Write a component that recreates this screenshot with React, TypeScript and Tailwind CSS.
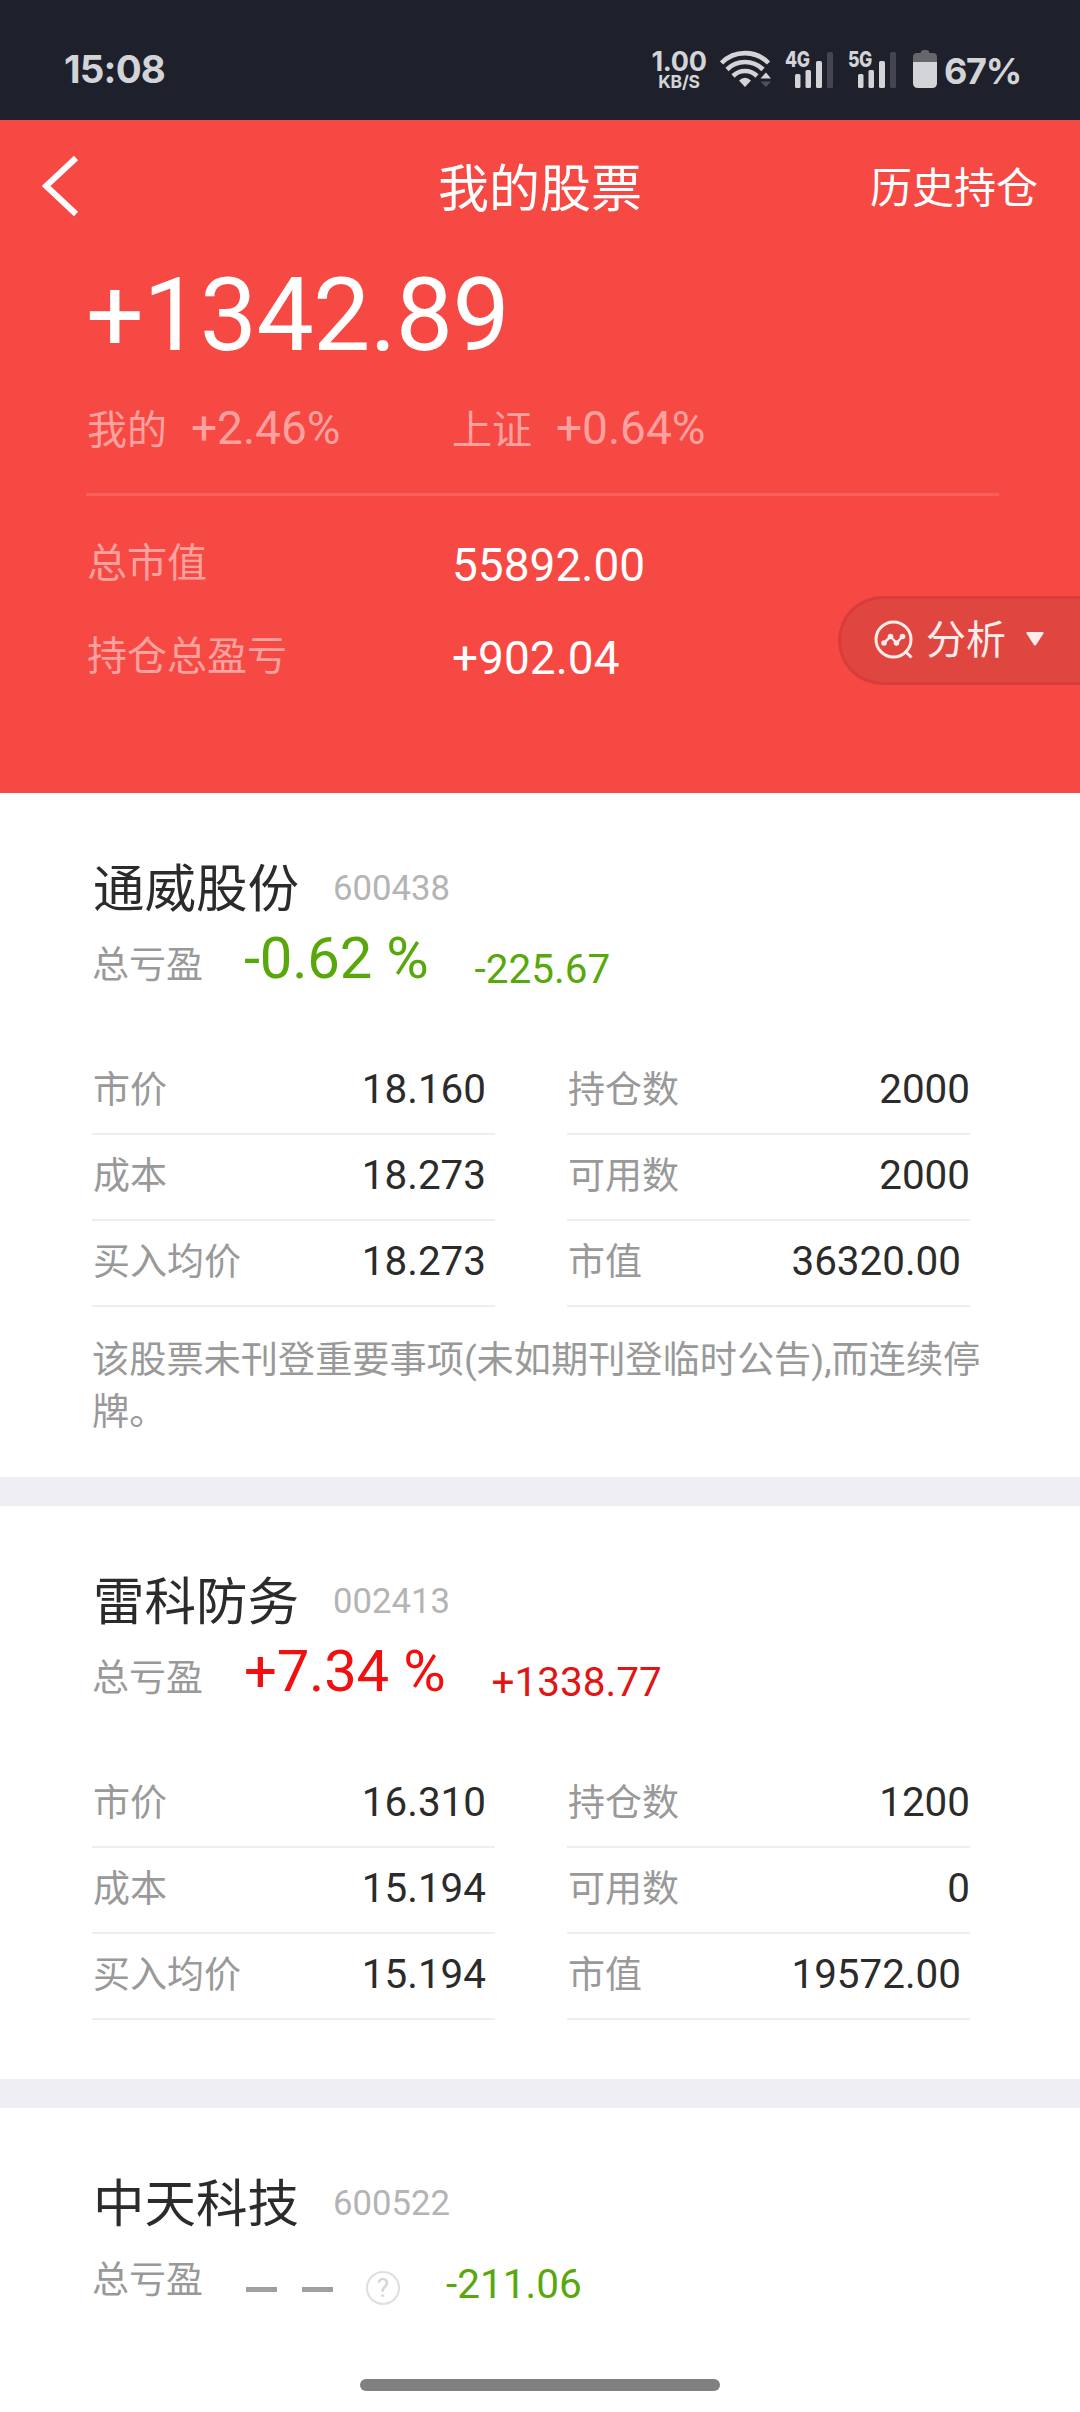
import React from "react";
import { clsx } from "clsx";

type Stock = {
  name: string;
  code: string;
  percent?: string;
  profit: string;
  up: boolean;
  left?: [string, string][];
  right?: [string, string][];
  notice?: string;
};

const stocks: Stock[] = [
  {
    name: "通威股份",
    code: "600438",
    percent: "-0.62 %",
    profit: "-225.67",
    up: false,
    left: [
      ["市价", "18.160"],
      ["成本", "18.273"],
      ["买入均价", "18.273"],
    ],
    right: [
      ["持仓数", "2000"],
      ["可用数", "2000"],
      ["市值", "36320.00"],
    ],
    notice: "该股票未刊登重要事项(未如期刊登临时公告),而连续停牌。",
  },
  {
    name: "雷科防务",
    code: "002413",
    percent: "+7.34 %",
    profit: "+1338.77",
    up: true,
    left: [
      ["市价", "16.310"],
      ["成本", "15.194"],
      ["买入均价", "15.194"],
    ],
    right: [
      ["持仓数", "1200"],
      ["可用数", "0"],
      ["市值", "19572.00"],
    ],
  },
  {
    name: "中天科技",
    code: "600522",
    profit: "-211.06",
    up: false,
  },
];

const WifiIcon = () => (
  <svg width="52" height="38" viewBox="0 0 52 38" fill="none" stroke="#d3d4d7" strokeWidth="4.6">
    <path d="M1.5 13 A33 33 0 0 1 48.5 13" />
    <path d="M7 19.5 A25.5 25.5 0 0 1 43 19.5" />
    <path d="M13 26 A17 17 0 0 1 37 26" />
    <path d="M19 30.5 Q25 25 31 30.5 L25 37 Z" fill="#d3d4d7" stroke="none" />
    <path d="M40.5 28.5 L46 22.5 L51 28.5 Z" fill="#d3d4d7" stroke="none" />
    <path d="M40.5 31.5 L46 37 L51 31.5 Z" fill="#50525b" stroke="none" />
  </svg>
);

const Signal = ({ label }: { label: string }) => (
  <div className="relative h-[38px] w-[49px]">
    <span className="absolute -top-[3px] left-0 origin-left scale-x-[0.8] text-[22px] font-extrabold leading-[24px] tracking-[-0.5px]">
      {label}
    </span>
    <svg width="49" height="38" viewBox="0 0 49 38" fill="#d3d4d7">
      <rect x="10" y="24" width="5.5" height="14" rx="1.5" />
      <rect x="20.5" y="20" width="5.5" height="18" rx="1.5" />
      <rect x="31" y="11" width="6" height="27" rx="1.5" />
      <rect x="42" y="2" width="6" height="36" rx="1.5" fill="#434650" />
    </svg>
  </div>
);

const BatteryIcon = () => (
  <svg width="24" height="38" viewBox="0 0 24 38">
    <path
      d="M0 12 V7 Q0 3 4 3 H7.5 Q8 0 11 0 H13 Q16 0 16.5 3 H20 Q24 3 24 7 V12 Z"
      fill="#65676d"
    />
    <path d="M0 12 H24 V33 Q24 38 19 38 H5 Q0 38 0 33 Z" fill="#d3d4d7" />
  </svg>
);

const StatusBar = () => (
  <div className="flex h-[120px] items-start bg-[#1e212b] pl-[64px] pr-[59px] font-['Inter',sans-serif] text-[#d3d4d7]">
    <span className="mt-[49px] text-[38.5px] font-bold leading-[40px] tracking-[-0.8px]">15:08</span>
    <div className="ml-auto mt-[50px] flex items-start">
      <div className="flex w-[56px] flex-col items-center font-bold">
        <span className="text-[27px] leading-[24px] tracking-[-0.3px]">1.00</span>
        <span className="text-[17.5px] leading-[16px] tracking-[-0.2px]">KB/S</span>
      </div>
      <div className="ml-[13px]">
        <WifiIcon />
      </div>
      <div className="ml-[13px]">
        <Signal label="4G" />
      </div>
      <div className="ml-[14px]">
        <Signal label="5G" />
      </div>
      <div className="ml-[16px]">
        <BatteryIcon />
      </div>
      <span className="ml-[7px] w-[77px] whitespace-nowrap text-[36px] font-bold leading-[42px] tracking-[-1.3px]">
        67%
      </span>
    </div>
  </div>
);

const Header = () => (
  <header className="relative h-[673px] bg-[#f64944] text-white">
    <div className="relative flex h-[137px] items-center justify-between pl-[42px] pr-[42px]">
      <svg width="37" height="62" viewBox="0 0 37 62" fill="none" stroke="white" strokeWidth="6" className="-mt-[5px]">
        <path d="M34 3 L4 31 L34 59" />
      </svg>
      <h1 className="absolute inset-x-0 pt-[2px] text-center text-[51px] leading-[60px]">我的股票</h1>
      <span className="pt-px text-[42px] leading-[60px]">历史持仓</span>
    </div>
    <div className="pl-[86px] pr-[81px]">
      <p className="h-[116px] text-[102px] leading-[116px] tracking-[-0.7px]">+1342.89</p>
      <div className="mt-[25px] grid h-[60px] grid-cols-[366px_1fr] text-[46px] leading-[60px] text-[#ffa29f]">
        <div className="flex items-baseline gap-6">
          <span className="ml-px text-[40px] leading-none">我的</span>
          <span>+2.46%</span>
        </div>
        <div className="flex items-baseline gap-6">
          <span className="text-[40px] leading-none">上证</span>
          <span>+0.64%</span>
        </div>
      </div>
      <div className="mt-[35px] h-[3px] bg-[#fa5e59]" />
      <div className="mt-[23px] grid grid-cols-[366px_1fr]">
        {[
          ["总市值", "55892.00"],
          ["持仓总盈亏", "+902.04"],
        ].map(([label, value]) => (
          <React.Fragment key={label}>
            <span className="h-[93px] pl-px text-[40px] leading-[90px] text-[#ffa29f]">{label}</span>
            <span className="h-[93px] text-[46px] leading-[92px]">{value}</span>
          </React.Fragment>
        ))}
      </div>
    </div>

    {/* floating analysis tab, pinned to the right edge */}
    <button className="absolute right-0 top-[476px] flex h-[89px] w-[242px] items-center rounded-l-full border-y-[3px] border-l-[3px] border-[#da3b3b] bg-[#df463f] pl-[33px] text-[#ffeceb]">
      <svg width="40" height="40" viewBox="0 0 40 40" fill="none" stroke="#ffeceb" strokeWidth="3" className="-mt-[2px]">
        <circle cx="19.5" cy="19.5" r="17.5" />
        <path d="M31 31 L37.5 37.5" />
        <path d="M10 23 L16.5 16.5 L22.5 23 L28.5 16.5" strokeWidth="2.5" />
        <g fill="#ffeceb" stroke="none">
          <circle cx="10" cy="23" r="2.8" />
          <circle cx="16.5" cy="16.5" r="2.8" />
          <circle cx="22.5" cy="23" r="2.8" />
          <circle cx="28.5" cy="16.5" r="2.8" />
        </g>
      </svg>
      <span className="ml-[12px] text-[40px] leading-[60px]">分析</span>
      <svg width="18" height="14" viewBox="0 0 18 14" fill="#ffeceb" className="-mt-[4px] ml-[20px]">
        <path d="M1 0 H17 Q18 0.5 17.5 1.5 L10 13 Q9 14 8 13 L0.5 1.5 Q0 0.5 1 0 Z" />
      </svg>
    </button>
  </header>
);

const Rows = ({ rows }: { rows: [string, string][] }) => (
  <div className="w-[403px]">
    {rows.map(([label, value]) => (
      <div
        key={label}
        className="flex h-[86px] items-center justify-between border-b-2 border-[#eeeeee] pb-[4px]"
      >
        <span className="pl-px pt-[4px] text-[37px] leading-[44px] text-[#999999]">{label}</span>
        <span className={clsx("pt-[2px] text-[40.4px] leading-[44px]", value.includes(".") && "pr-[9px]")}>
          {value}
        </span>
      </div>
    ))}
  </div>
);

const StockCard = ({ stock }: { stock: Stock }) => (
  <section className="bg-white pl-[92px] pt-[65px] text-[#2b2b2b]">
    <div className="flex h-[60px] items-center gap-[34px]">
      <h2 className="pl-px pt-[4px] text-[51.5px] leading-[60px]">{stock.name}</h2>
      <span className="text-[34.7px] leading-[60px] text-[#b4b4b4]">{stock.code}</span>
    </div>
    <div className="flex h-[72px] items-end leading-none">
      <span className="pb-[6px] text-[37px] text-[#999999]">总亏盈</span>
      {stock.percent ? (
        <span className={clsx("ml-[41px] pb-[3px] text-[58px] tracking-[-0.2px]", stock.up ? "text-[#f01010]" : "text-[#58a80c]")}>
          {stock.percent}
        </span>
      ) : (
        <div className="ml-[43px] flex items-end">
          <i className="mb-[13px] h-[5px] w-[31px] bg-[#a0a0a0]" />
          <i className="mb-[13px] ml-[25px] h-[5px] w-[31px] bg-[#a0a0a0]" />
          <span className="ml-[33px] flex h-[34px] w-[34px] items-center justify-center rounded-full border-2 border-[#dedede] text-[26px] text-[#d4d4d4]">
            ?
          </span>
        </div>
      )}
      <span className={clsx("ml-[46px] pb-px text-[40.5px]", stock.up ? "text-[#e01616]" : "text-[#58a80c]")}>
        {stock.profit}
      </span>
    </div>
    {stock.left && stock.right && (
      <div className="mt-[59px] flex gap-[72px]">
        <Rows rows={stock.left} />
        <Rows rows={stock.right} />
      </div>
    )}
    {stock.notice && (
      <p className="mt-[28px] w-[898px] pb-[39px] text-[37.2px] leading-[51.5px] text-[#999999]">{stock.notice}</p>
    )}
    {stock.left && !stock.notice && <div className="h-[59px]" />}
  </section>
);

export default function App() {
  return (
    <div
      lang="zh-CN"
      className="relative h-[2412px] w-[1080px] overflow-hidden bg-white font-['Roboto','Noto_Sans_CJK_SC',sans-serif]"
    >
      <StatusBar />
      <Header />
      <main className="flex flex-col gap-[29px] bg-[#efeef4]">
        {stocks.map((stock) => (
          <StockCard key={stock.code} stock={stock} />
        ))}
      </main>
      <div className="absolute bottom-[21px] left-[360px] h-[12px] w-[360px] rounded-full bg-[#808080]" />
    </div>
  );
}
